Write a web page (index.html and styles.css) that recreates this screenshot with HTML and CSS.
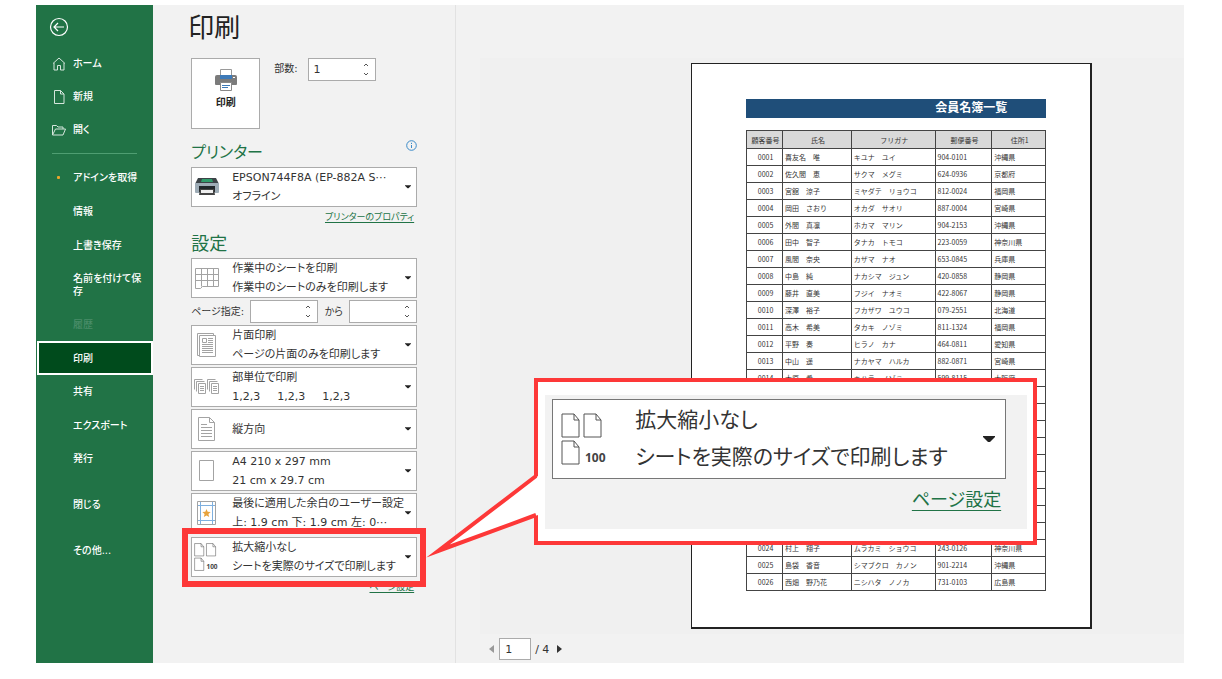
FILE: index.html
```html
<!DOCTYPE html>
<html lang="ja">
<head>
<meta charset="utf-8">
<title>印刷</title>
<link rel="stylesheet" href="styles.css">
</head>
<body>
<svg class="defs" aria-hidden="true">
  <symbol id="caret" viewBox="0 0 12 7"><path d="M0 0h12v1L7 6H5L0 1z"/></symbol>
</svg>
<div class="app">
  <nav class="sidebar">
    <button class="back" aria-label="戻る">
      <svg width="20" height="20" viewBox="0 0 20 20"><circle cx="10" cy="10" r="8.5"/><path d="M15 10H5.5M9 6l-4 4 4 4"/></svg>
    </button>
    <a class="item" href="#"><svg width="14" height="14" viewBox="0 0 14 14"><path d="M1 6.500 7 1l6 5.500M2 6v7h3.500V8.500h3V13H12V6"/></svg>ホーム</a>
    <a class="item" href="#"><svg width="14" height="14" viewBox="0 0 14 14"><path d="M2.500.5h6l3.500 3.500v9.500H2.500zM8.500.5V4H12"/></svg>新規</a>
    <a class="item" href="#"><svg width="14" height="14" viewBox="0 0 14 14"><path d="M.5 12V2.500h4L6 4h5v2M.5 12 3.500 6h10L11 12z"/></svg>開く</a>
    <hr class="rule">
    <a class="item tall" href="#"><span class="dot"></span>アドインを取得</a>
    <a class="item tall" href="#"><span></span>情報</a>
    <a class="item tall" href="#"><span></span>上書き保存</a>
    <a class="item tall wrap" href="#"><span></span>名前を付けて保存</a>
    <a class="item tall disabled" href="#"><span></span>履歴</a>
    <a class="item tall active" href="#" aria-current="page"><span></span>印刷</a>
    <a class="item" href="#"><span></span>共有</a>
    <a class="item tall" href="#"><span></span>エクスポート</a>
    <a class="item" href="#"><span></span>発行</a>
    <a class="item tall apart" href="#"><span></span>閉じる</a>
    <a class="item tall apart" href="#"><span></span>その他...</a>
  </nav>

  <main class="settings">
    <h1>印刷</h1>
    <div class="start">
      <button class="print">
        <svg width="24" height="22" viewBox="0 0 24 22">
          <path d="M1 8q0-2 2-2h18q2 0 2 2v7q0 1-1 1H2q-1 0-1-1z" fill="#7b7b7b"/>
          <path d="M6.500.5h11v7h-11z" fill="#fff" stroke="#999"/>
          <path d="M6 6h12v4H6z" fill="#3d7ab8"/><path d="M19 8h2v1h-2z" fill="#fff"/>
          <path d="M6.500 13.500h11v8h-11z" fill="#fff" stroke="#888"/>
          <path d="M8 16.500h8M8 18.500h6" stroke="#3d7ab8"/>
        </svg>
        印刷
      </button>
      <label for="copies">部数:</label>
      <div class="spin copies"><input id="copies" type="text" inputmode="numeric" value="1">
        <span class="steps"><button aria-label="増やす"><svg viewBox="0 0 6 4"><path d="m1 3 2-2 2 2"/></svg></button><button aria-label="減らす"><svg viewBox="0 0 6 4"><path d="m1 1 2 2 2-2"/></svg></button></span></div>
    </div>

    <div class="heading">
      <h2>プリンター</h2>
      <svg class="info" width="11" height="11" viewBox="0 0 11 11"><circle cx="5.500" cy="5.500" r="4.800"/><path d="M5.500 5v3M5.500 2.800v1.200"/></svg>
    </div>
    <button class="option" aria-haspopup="listbox">
      <svg class="pic" width="26" height="20" viewBox="0 0 26 20">
        <path d="M4 1h18l3 6H1z" fill="#3c4347"/><path d="M8 2h10l1 3H7z" fill="#2f9c6b"/>
        <path d="M1 6h24v9q0 1-1 1H2q-1 0-1-1z" fill="#9eacb6"/><path d="M5 9h16v6H5z" fill="#20262a"/>
        <path d="M6 12h14l1 6H5z" fill="#444"/><path d="M7 13h12v3H7z" fill="#eee"/>
      </svg>
      <span class="text"><span>EPSON744F8A (EP-882A S⋯</span><span>オフライン</span></span>
      <svg class="caret"><use href="#caret"/></svg>
    </button>
    <a class="link" href="#">プリンターのプロパティ</a>

    <h2 class="second">設定</h2>
    <div class="options">
      <button class="option" aria-haspopup="listbox">
        <svg class="pic" width="26" height="22" viewBox="0 0 26 22"><path d="M1.500 1.500h23v18h-16l-2 2h-5zM1.500 7.500h23M1.500 13.500h23M7.500 1.500v18M13.500 1.500v18M19.500 1.500v18" class="line"/></svg>
        <span class="text"><span>作業中のシートを印刷</span><span>作業中のシートのみを印刷します</span></span>
        <svg class="caret"><use href="#caret"/></svg>
      </button>
      <div class="range">
        <label for="from">ページ指定:</label>
        <div class="spin"><input id="from" type="text" inputmode="numeric">
          <span class="steps"><button aria-label="増やす"><svg viewBox="0 0 6 4"><path d="m1 3 2-2 2 2"/></svg></button><button aria-label="減らす"><svg viewBox="0 0 6 4"><path d="m1 1 2 2 2-2"/></svg></button></span></div>
        <label for="to">から</label>
        <div class="spin"><input id="to" type="text" inputmode="numeric">
          <span class="steps"><button aria-label="増やす"><svg viewBox="0 0 6 4"><path d="m1 3 2-2 2 2"/></svg></button><button aria-label="減らす"><svg viewBox="0 0 6 4"><path d="m1 1 2 2 2-2"/></svg></button></span></div>
      </div>
      <button class="option" aria-haspopup="listbox">
        <svg class="pic" width="26" height="26" viewBox="0 0 26 26"><path d="M5.500 23.500h-2v-22h16v2M5.500 3.500h16v21h-16z" class="line"/><path d="M8.500 6.500h4v4h-4zM14 6.500h5M14 8.500h5M14 10.500h5M8 12.500h11M8 14.500h11M8 16.500h11M8 18.500h11M8 20.500h11" class="line"/></svg>
        <span class="text"><span>片面印刷</span><span>ページの片面のみを印刷します</span></span>
        <svg class="caret"><use href="#caret"/></svg>
      </button>
      <button class="option" aria-haspopup="listbox">
        <svg class="pic" width="26" height="18" viewBox="0 0 26 18"><g class="line"><path d="M.5 11.500V1.500h8M2.500 13.500V3.500h8M4.500 5.500h7v10h-7zM6 8.500h4M6 10.500h4M6 12.500h4"/><path d="M13.500 11.500V1.500h8M15.500 13.500V3.500h8M17.500 5.500h7v10h-7zM19 8.500h4M19 10.500h4M19 12.500h4"/></g></svg>
        <span class="text"><span>部単位で印刷</span><span class="sets"><span>1,2,3</span><span>1,2,3</span><span>1,2,3</span></span></span>
        <svg class="caret"><use href="#caret"/></svg>
      </button>
      <button class="option" aria-haspopup="listbox">
        <svg class="pic" width="26" height="24" viewBox="0 0 26 24"><path d="M4.500.5h11l5 5v18h-16zM15.500.5v5h5M7 7.500h6M7 10.500h11M7 13.500h11M7 16.500h11M7 19.500h11" class="line"/></svg>
        <span class="text"><span>縦方向</span></span>
        <svg class="caret"><use href="#caret"/></svg>
      </button>
      <button class="option" aria-haspopup="listbox">
        <svg class="pic" width="26" height="22" viewBox="0 0 26 22"><path d="M5.500.5h14v20h-14z" class="line"/></svg>
        <span class="text"><span>A4 210 x 297 mm</span><span>21 cm x 29.7 cm</span></span>
        <svg class="caret"><use href="#caret"/></svg>
      </button>
      <button class="option" aria-haspopup="listbox">
        <svg class="pic" width="26" height="24" viewBox="0 0 26 24"><path d="M3.500.5h18v23h-18z" class="line"/><path d="M6.500 1v22M18.500 1v22M4 4.500h17M4 19.500h17" stroke="#7fb0df"/><path d="m12.500 8 1.200 2.800 3 .2-2.300 2 .8 3-2.700-1.600L9.800 16l.8-3-2.300-2 3-.2z" fill="#e8a33d"/></svg>
        <span class="text"><span>最後に適用した余白のユーザー設定</span><span>上: 1.9 cm 下: 1.9 cm 左: 0⋯</span></span>
        <svg class="caret"><use href="#caret"/></svg>
      </button>
      <div class="spotlight">
        <button class="option" aria-haspopup="listbox">
          <svg class="pic" width="26" height="28" viewBox="0 0 48 52"><path class="sheets" d="M1 1h12l5 6v17H1zM13 1v6h5M23 1h12l5 6v17H23zM35 1v6h5M1 28h12l5 6v17H1zM13 28v6h5"/><text x="23" y="49" class="hundred">100</text></svg>
          <span class="text"><span>拡大縮小なし</span><span>シートを実際のサイズで印刷します</span></span>
          <svg class="caret"><use href="#caret"/></svg>
        </button>
        <div class="frame"></div>
        <aside class="callout">
          <svg class="tail" width="116" height="90" viewBox="0 0 116 90"><path d="M116 3 16 78l100-36z" fill="#fff"/><path d="M114 3 16 78l98-36" fill="none" stroke="#fd3838" stroke-width="4" stroke-miterlimit="20"/></svg>
          <div class="zoomed">
            <button class="option large" aria-haspopup="listbox">
              <svg class="pic" width="48" height="52" viewBox="0 0 48 52"><path class="sheets" d="M1 1h12l5 6v17H1zM13 1v6h5M23 1h12l5 6v17H23zM35 1v6h5M1 28h12l5 6v17H1zM13 28v6h5"/><text x="24" y="49" class="hundred">100</text></svg>
              <span class="text"><span>拡大縮小なし</span><span>シートを実際のサイズで印刷します</span></span>
              <svg class="caret"><use href="#caret"/></svg>
            </button>
            <a class="link" href="#">ページ設定</a>
          </div>
        </aside>
      </div>
    </div>
    <a class="link" href="#">ページ設定</a>
  </main>

  <section class="preview">
    <div class="canvas">
      <article class="paper">
        <h3>会員名簿一覧</h3>
        <table>
          <colgroup><col class="c1"><col class="c2"><col class="c3"><col class="c4"><col class="c5"></colgroup>
          <thead><tr><th>顧客番号</th><th>氏名</th><th>フリガナ</th><th>郵便番号</th><th>住所1</th></tr></thead>
          <tbody>
            <tr><td>0001</td><td>喜友名　唯</td><td>キユナ　ユイ</td><td>904-0101</td><td>沖縄県</td></tr>
            <tr><td>0002</td><td>佐久間　恵</td><td>サクマ　メグミ</td><td>624-0936</td><td>京都府</td></tr>
            <tr><td>0003</td><td>宮舘　涼子</td><td>ミヤダテ　リョウコ</td><td>812-0024</td><td>福岡県</td></tr>
            <tr><td>0004</td><td>岡田　さおり</td><td>オカダ　サオリ</td><td>887-0004</td><td>宮崎県</td></tr>
            <tr><td>0005</td><td>外間　真凛</td><td>ホカマ　マリン</td><td>904-2153</td><td>沖縄県</td></tr>
            <tr><td>0006</td><td>田中　智子</td><td>タナカ　トモコ</td><td>223-0059</td><td>神奈川県</td></tr>
            <tr><td>0007</td><td>風間　奈央</td><td>カザマ　ナオ</td><td>653-0845</td><td>兵庫県</td></tr>
            <tr><td>0008</td><td>中島　純</td><td>ナカシマ　ジュン</td><td>420-0858</td><td>静岡県</td></tr>
            <tr><td>0009</td><td>藤井　直美</td><td>フジイ　ナオミ</td><td>422-8067</td><td>静岡県</td></tr>
            <tr><td>0010</td><td>深澤　裕子</td><td>フカザワ　ユウコ</td><td>079-2551</td><td>北海道</td></tr>
            <tr><td>0011</td><td>高木　希美</td><td>タカキ　ノゾミ</td><td>811-1324</td><td>福岡県</td></tr>
            <tr><td>0012</td><td>平野　奏</td><td>ヒラノ　カナ</td><td>464-0811</td><td>愛知県</td></tr>
            <tr><td>0013</td><td>中山　遥</td><td>ナカヤマ　ハルカ</td><td>882-0871</td><td>宮崎県</td></tr>
            <tr><td>0014</td><td>木原　希</td><td>キハラ　ノゾミ</td><td>599-8115</td><td>大阪府</td></tr>
            <tr><td></td><td></td><td></td><td></td><td></td></tr>
            <tr><td></td><td></td><td></td><td></td><td></td></tr>
            <tr><td></td><td></td><td></td><td></td><td></td></tr>
            <tr><td></td><td></td><td></td><td></td><td></td></tr>
            <tr><td></td><td></td><td></td><td></td><td></td></tr>
            <tr><td></td><td></td><td></td><td></td><td></td></tr>
            <tr><td></td><td></td><td></td><td></td><td></td></tr>
            <tr><td></td><td></td><td></td><td></td><td></td></tr>
            <tr><td></td><td></td><td></td><td></td><td></td></tr>
            <tr><td>0024</td><td>村上　翔子</td><td>ムラカミ　ショウコ</td><td>243-0126</td><td>神奈川県</td></tr>
            <tr><td>0025</td><td>島袋　香音</td><td>シマブクロ　カノン</td><td>901-2214</td><td>沖縄県</td></tr>
            <tr><td>0026</td><td>西畑　野乃花</td><td>ニシハタ　ノノカ</td><td>731-0103</td><td>広島県</td></tr>
          </tbody>
        </table>
      </article>
    </div>
    <div class="pager">
      <button aria-label="前のページ" disabled><svg width="5" height="8" viewBox="0 0 5 8"><path d="M5 0v8L0 4z" fill="#999"/></svg></button>
      <input type="text" value="1" aria-label="ページ">
      <span>/ 4</span>
      <button aria-label="次のページ"><svg width="5" height="8" viewBox="0 0 5 8"><path d="M0 0v8l5-4z" fill="#333"/></svg></button>
    </div>
  </section>
</div>
</body>
</html>
```
FILE: styles.css
```css
* { box-sizing: border-box; }

body {
  margin: 0;
  padding: 5px 38px 17px 36px;
  background: #fff;
  color: #333;
  font: 11px/19px "DejaVu Sans", "Noto Sans CJK JP", sans-serif;
  font-feature-settings: "palt";
}

button, input {
  margin: 0;
  padding: 0;
  border: 0;
  background: none;
  color: inherit;
  font: inherit;
  font-feature-settings: inherit;
}

.defs { position: absolute; width: 0; height: 0; }
.hundred { font: bold 12px "Open Sans", sans-serif; fill: #444; }
.sheets { fill: #fff; stroke: #555; }

.app {
  display: flex;
  min-height: calc(100vh - 22px);
  background: #f2f2f2;
}

/* Sidebar */
.sidebar {
  display: flex;
  flex-direction: column;
  flex: 0 0 117px;
  background: #217346;
  color: #fff;
}
.sidebar svg { fill: none; stroke: #fff; flex: none; }
.back { height: 42px; padding: 2px 13px 0; text-align: left; }
.back svg { display: block; stroke-width: 1.2; }
.item {
  display: grid;
  grid-template-columns: 14px 1fr;
  column-gap: 7px;
  align-items: center;
  min-height: 33px;
  padding: 0 16px;
  color: #fff;
  font-size: 10px;
  font-weight: 500;
  line-height: 13px;
  text-decoration: none;
  white-space: nowrap;
}
.item svg { stroke: #d5e6dc; }
.tall { min-height: 34px; }
.wrap { padding: 10px 9px 9px 16px; white-space: normal; }
.rule {
  width: 85px;
  height: 1px;
  margin: 7px 16px 6px;
  border: 0;
  background: #4f9e72;
}
.dot { width: 3px; height: 3px; margin-left: 5px; border-radius: 1px; background: #eaa52b; }
.disabled { color: #4a8d69; }
.active { margin-left: 1px; padding: 0 13px; border: 2px solid #fff; background: #004b1c; }
.apart { margin-top: 12px; }

/* Settings */
.settings {
  flex: 0 0 303px;
  padding: 0 38px;
  border-right: 1px solid #e2e2e2;
}
h1 {
  margin: 0 0 0 -3px;
  padding: 4px 0 11px;
  color: #222;
  font-size: 26px;
  font-weight: 400;
  line-height: 38px;
}
label { font-size: 10px; }
.start { display: flex; align-items: flex-start; }
.start label { margin: 1px 10px 0 14px; }
.print {
  display: flex;
  flex-direction: column;
  align-items: center;
  gap: 2px;
  width: 69px;
  height: 71px;
  padding-top: 10px;
  border: 1px solid #ababab;
  background: #fff;
  color: #222;
  font-size: 10px;
  font-weight: 700;
}
.spin {
  display: flex;
  flex: none;
  width: 68px;
  height: 23px;
  border: 1px solid #ababab;
  background: #fff;
}
.spin input { flex: 1; min-width: 0; padding-left: 5px; }
.steps { display: flex; flex-direction: column; justify-content: space-evenly; width: 12px; }
.steps button { display: flex; height: 8px; align-items: center; }
.steps svg { width: 6px; height: 4px; fill: none; stroke: #555; }
.heading { display: flex; justify-content: space-between; align-items: flex-start; margin-top: 10px; }
h2 { margin: 0; color: #217346; font-size: 18px; font-weight: 400; line-height: 28px; }
.heading h2 { font-size: 16px; }
.second { margin-top: 3px; }
.info { margin-top: 1px; fill: none; stroke: #3a8ac8; }
.option {
  display: flex;
  align-items: center;
  width: 100%;
  height: 40px;
  padding: 0 5px 0 2px;
  border: 1px solid #ababab;
  background: #fff;
  text-align: left;
}
.pic { flex: none; }
.line { fill: none; stroke: #a3a3a3; }
.text { display: flex; flex: 1; flex-direction: column; margin-left: 12px; min-width: 0; white-space: nowrap; }
.sets { display: flex; gap: 17px; }
.caret { flex: none; width: 6px; height: 4px; fill: #222; }
.link {
  display: block;
  width: fit-content;
  margin-left: auto;
  padding-right: 3px;
  color: #217346;
  font-size: 9px;
  line-height: 20px;
  text-underline-offset: 2px;
}
.options { display: flex; flex-direction: column; gap: 2px; }
.range { display: flex; justify-content: space-between; align-items: center; height: 23px; }

/* Highlighted option and its enlargement */
.spotlight { position: relative; margin-top: 2px; }
.frame { position: absolute; inset: -9px -9px -10px -9px; border: 6px solid #fd3838; pointer-events: none; }
.callout {
  position: absolute;
  z-index: 1;
  left: 343px;
  top: -159px;
  width: 503px;
  padding: 13px 6px 12px 7px;
  border: 4px solid #fd3838;
  background: #fff;
}
.tail { position: absolute; left: -116px; top: 91px; }
.zoomed { padding: 4px 21px 9px 7px; background: #f2f2f2; font-size: 21px; }
.large { height: 80px; padding: 0 10px 0 8px; border-color: #777; }
.large .text { margin-left: 26px; line-height: 37px; }
.large .caret { width: 12px; height: 7px; }
.zoomed .link { padding-right: 5px; font-size: 18px; line-height: 41px; text-underline-offset: 4px; }

/* Preview */
.preview { display: flex; flex: 1; flex-direction: column; min-width: 0; }
.canvas { flex: 1; margin: 53px 0 0 24px; padding: 5px 0 5px 211px; background: #f0f0f0; }
.paper {
  width: 401px;
  padding: 35px 44px 36px 54px;
  border: solid #222;
  border-width: 1px 2px 2px 1px;
  background: #fff;
}
h3 {
  margin: 0 0 12px;
  padding-left: 50%;
  background: #1f4e79;
  color: #fff;
  font-size: 12px;
  font-weight: 700;
  line-height: 19px;
  text-align: center;
  font-feature-settings: normal;
}
table {
  width: 100%;
  border-collapse: collapse;
  table-layout: fixed;
  font: 7px/14px "Noto Sans CJK JP", sans-serif;
  font-feature-settings: normal;
}
.c1 { width: 12%; }
.c2 { width: 23%; }
.c3 { width: 28%; }
.c4 { width: 19%; }
.c5 { width: 18%; }
th, td { height: 17px; padding: 0 0 0 2px; border: 1px solid #444; white-space: nowrap; }
th { height: 18px; background: #d9d9d9; font-weight: 400; }
td:first-child { text-align: center; }
.pager { display: flex; align-items: center; gap: 4px; padding: 4px 0 3px 31px; }
.pager button { width: 8px; }
.pager button:last-child { margin-left: 2px; }
.pager svg { display: block; margin: auto; }
.pager input { width: 32px; height: 22px; padding-left: 5px; border: 1px solid #ababab; background: #fff; }
```
